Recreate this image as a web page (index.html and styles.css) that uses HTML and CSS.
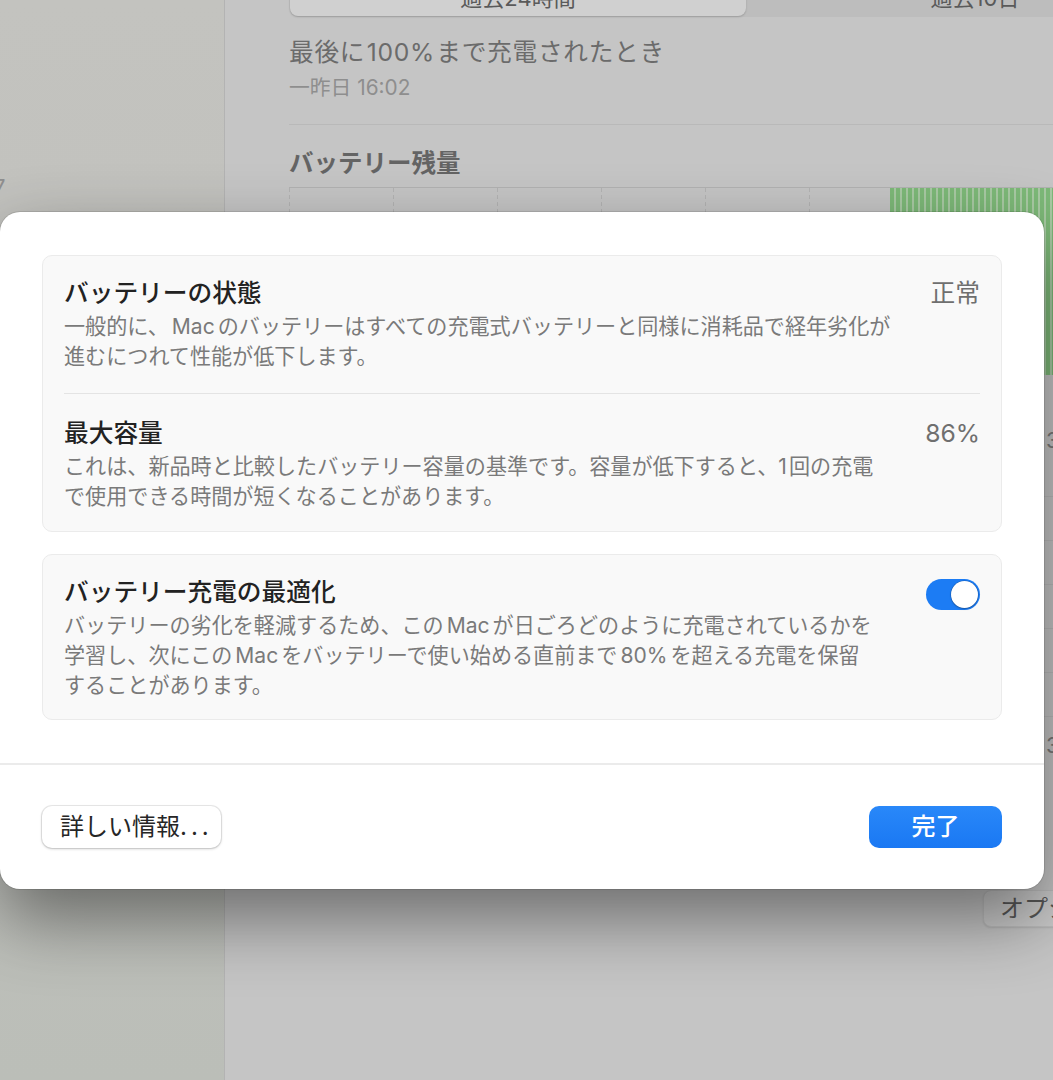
FILE: index.html
```html
<!DOCTYPE html>
<html lang="ja">
<head>
<meta charset="utf-8">
<title>バッテリー</title>
<link rel="stylesheet" href="styles.css">
</head>
<body>
<div class="window">
  <aside class="sidebar">
    <span class="side-glyph">7</span>
  </aside>
  <main class="main">
    <div class="panel">
      <div class="segmented">
        <div class="seg seg-on">過去24時間</div>
        <div class="seg">過去10日</div>
      </div>
      <div class="last-title">最後に<span class="lat-s">100%</span>まで充電されたとき</div>
      <div class="last-sub">一昨日 16:02</div>
      <div class="hr"></div>
      <div class="level-title">バッテリー残量</div>
      <div class="chart">
        <div class="bars">
          <span class="bar"></span><span class="bar"></span><span class="bar"></span><span class="bar"></span><span class="bar"></span><span class="bar"></span><span class="bar"></span><span class="bar"></span><span class="bar"></span><span class="bar"></span><span class="bar"></span><span class="bar"></span><span class="bar"></span><span class="bar"></span><span class="bar"></span><span class="bar"></span><span class="bar"></span><span class="bar"></span><span class="bar"></span><span class="bar"></span><span class="bar"></span><span class="bar"></span><span class="bar"></span><span class="bar"></span><span class="bar"></span><span class="bar"></span><span class="bar"></span><span class="bar"></span>
        </div>
      </div>
      <div class="usage">
        <div class="axis-label axis-first">3</div>
        <div class="usage-grid"></div>
        <div class="axis-label">3</div>
      </div>
      <div class="opt-btn">オプション...</div>
    </div>
  </main>
</div>

<div class="sheet">
  <div class="sheet-body">
    <section class="card">
      <div class="row row-1">
        <div class="row-text">
          <div class="row-title">バッテリーの状態</div>
          <div class="row-desc">一般的に、<span class="lat">Mac</span>のバッテリーはすべての充電式バッテリーと同様に消耗品で経年劣化が<br>進むにつれて性能が低下します。</div>
        </div>
        <div class="row-value">正常</div>
      </div>
      <div class="row-sep"></div>
      <div class="row row-2">
        <div class="row-text">
          <div class="row-title">最大容量</div>
          <div class="row-desc">これは、新品時と比較したバッテリー容量の基準です。容量が低下すると、<span class="lat lat-r">1</span>回の充電<br>で使用できる時間が短くなることがあります。</div>
        </div>
        <div class="row-value">86%</div>
      </div>
    </section>
    <section class="card">
      <div class="row row-3">
        <div class="row-text">
          <div class="row-title">バッテリー充電の最適化</div>
          <div class="row-desc">バッテリーの劣化を軽減するため、この<span class="lat">Mac</span>が日ごろどのように充電されているかを<br>学習し、次にこの<span class="lat">Mac</span>をバッテリーで使い始める直前まで<span class="lat">80%</span>を超える充電を保留<br>することがあります。</div>
        </div>
        <div class="toggle" role="switch" aria-checked="true"><span class="knob"></span></div>
      </div>
    </section>
  </div>
  <div class="sheet-divider"></div>
  <div class="sheet-footer">
    <button class="btn btn-plain">詳しい情報<span class="dots">...</span></button>
    <button class="btn btn-primary">完了</button>
  </div>
</div>
</body>
</html>
```

FILE: styles.css
```css
* { box-sizing: border-box; }
html, body { margin: 0; padding: 0; }
body {
  width: 1053px;
  height: 1080px;
  overflow: hidden;
  position: relative;
  background: #c5c5c5;
  font-family: Inter, "Noto Sans CJK JP", sans-serif;
}

/* background window */
.window {
  display: flex;
  width: 1053px;
  height: 1080px;
  overflow: hidden;
}
.sidebar {
  flex: none;
  width: 225px;
  background: linear-gradient(180deg, #c3c3bf 0%, #c0c0bc 55%, #bbbeb8 100%);
  border-right: 1px solid #b3b3b3;
  padding-top: 174px;
}
.side-glyph {
  display: block;
  margin-left: -7px;
  font-size: 22px;
  line-height: 26px;
  color: #8f8f8f;
}
.main {
  flex: 1;
  min-width: 0;
  background: #c5c5c5;
  padding-left: 43px;
}
.panel {
  width: 900px;
  height: 100%;
  padding-left: 21px;
}
.segmented {
  display: flex;
  width: 880px;
  height: 38px;
  margin-top: -21px;
  padding: 1px;
  background: #bdbdbd;
  border-radius: 9px;
}
.seg {
  flex: none;
  width: 458px;
  text-align: center;
  font-size: 22px;
  line-height: 36px;
  color: #5a5a5a;
}
.seg-on {
  width: 456px;
  background: #d0d0d0;
  border-radius: 8px;
  box-shadow: 0 1px 2px rgba(0, 0, 0, 0.18);
}
.last-title {
  margin-top: 20px;
  font-size: 24.7px;
  line-height: 30px;
  letter-spacing: 0.7px;
  color: #6b6b6b;
}
.lat-s { margin: 0 0.06em; }
.last-sub {
  margin-top: 8px;
  font-size: 20.8px;
  line-height: 26px;
  color: #8e8e8e;
}
.hr {
  margin-top: 23px;
  height: 1px;
  background: #b9b9b9;
}
.level-title {
  margin-top: 23px;
  font-size: 24.5px;
  line-height: 30px;
  font-weight: 700;
  color: #646464;
}
.chart {
  margin-top: 9px;
  height: 188px;
  border-top: 1px solid #b2b2b2;
  background-image:
    repeating-linear-gradient(to bottom, transparent 0 4px, #c5c5c5 4px 7px),
    repeating-linear-gradient(to right, #b3b3b3 0 1px, transparent 1px 104px);
}
.bars {
  display: flex;
  gap: 2px;
  height: 100%;
  margin-left: 601px;
  background: #a9caa4;
}
.bar {
  flex: none;
  width: 4px;
  height: 100%;
  background: #7db978;
}
.axis-label {
  padding-left: 757px;
  font-size: 22px;
  line-height: 26px;
  color: #7a7a7a;
}
.axis-first { margin-top: 52px; }
.usage-grid {
  height: 279px;
  background: repeating-linear-gradient(to bottom, transparent 0 43px, #bababa 43px 44px);
}
.opt-btn {
  margin-top: 132px;
  margin-left: 694px;
  width: 200px;
  height: 37px;
  padding-left: 16px;
  background: #cbcbcb;
  border: 1px solid #bdbdbd;
  border-radius: 8px;
  box-shadow: 0 1px 2px rgba(0, 0, 0, 0.1);
  font-size: 24px;
  line-height: 35px;
  color: #585858;
  white-space: nowrap;
}

/* sheet */
.sheet {
  position: absolute;
  left: 0;
  top: 212px;
  width: 1044px;
  background: #fff;
  border-radius: 20px;
  box-shadow: 0 0 0 1px rgba(0, 0, 0, 0.1), 0 30px 70px rgba(0, 0, 0, 0.45);
}
.sheet-body {
  display: flex;
  flex-direction: column;
  gap: 22px;
  padding: 43px 42px;
}
.card {
  background: #f9f9f9;
  border: 1px solid #ebebeb;
  border-radius: 10px;
}
.row {
  display: flex;
  align-items: flex-start;
  gap: 20px;
  padding: 20px 21px 21px;
}
.row-2 { padding: 22px 21px 19px; }
.row-3 { padding: 20px 21px 18px; }
.row-text { flex: 1; min-width: 0; }
.row-title {
  font-size: 24.7px;
  line-height: 34px;
  font-weight: 500;
  color: #222222;
}
.row-desc {
  margin-top: 2px;
  font-size: 21.1px;
  line-height: 30px;
  color: #7a7a7a;
  white-space: nowrap;
}
.row-value {
  flex: none;
  font-size: 24.7px;
  line-height: 34px;
  color: #6f6f6f;
}
.row-sep {
  height: 1px;
  margin: 0 21px;
  background: #e4e4e4;
}
.lat { margin: 0 0.14em; }
.lat-r { margin: 0 0.1em 0 0; }
.toggle {
  flex: none;
  display: flex;
  justify-content: flex-end;
  width: 54px;
  height: 31px;
  margin-top: 4px;
  padding: 2px;
  border-radius: 16px;
  background: #1c7cf4;
}
.knob {
  width: 27px;
  height: 27px;
  border-radius: 50%;
  background: #fff;
  box-shadow: 0 0 0 0.5px rgba(0, 0, 0, 0.2), 0 1px 2px rgba(0, 0, 0, 0.25);
}
.sheet-divider {
  height: 2px;
  background: #ebebeb;
}
.sheet-footer {
  display: flex;
  justify-content: space-between;
  align-items: center;
  padding: 41px 42px;
}
.btn {
  height: 42px;
  padding: 0;
  border: none;
  border-radius: 10px;
  font-family: inherit;
  font-size: 24px;
  line-height: 42px;
}
.btn-plain {
  width: 179px;
  padding-left: 18px;
  text-align: left;
  background: #fff;
  color: #262626;
  box-shadow: 0 0 0 1px rgba(0, 0, 0, 0.08), 0 1px 3px rgba(0, 0, 0, 0.2);
}
.dots { letter-spacing: 4px; }
.btn-primary {
  width: 133px;
  background: linear-gradient(180deg, #2988f9 0%, #1a78f3 100%);
  color: #fff;
  font-weight: 500;
}
```
